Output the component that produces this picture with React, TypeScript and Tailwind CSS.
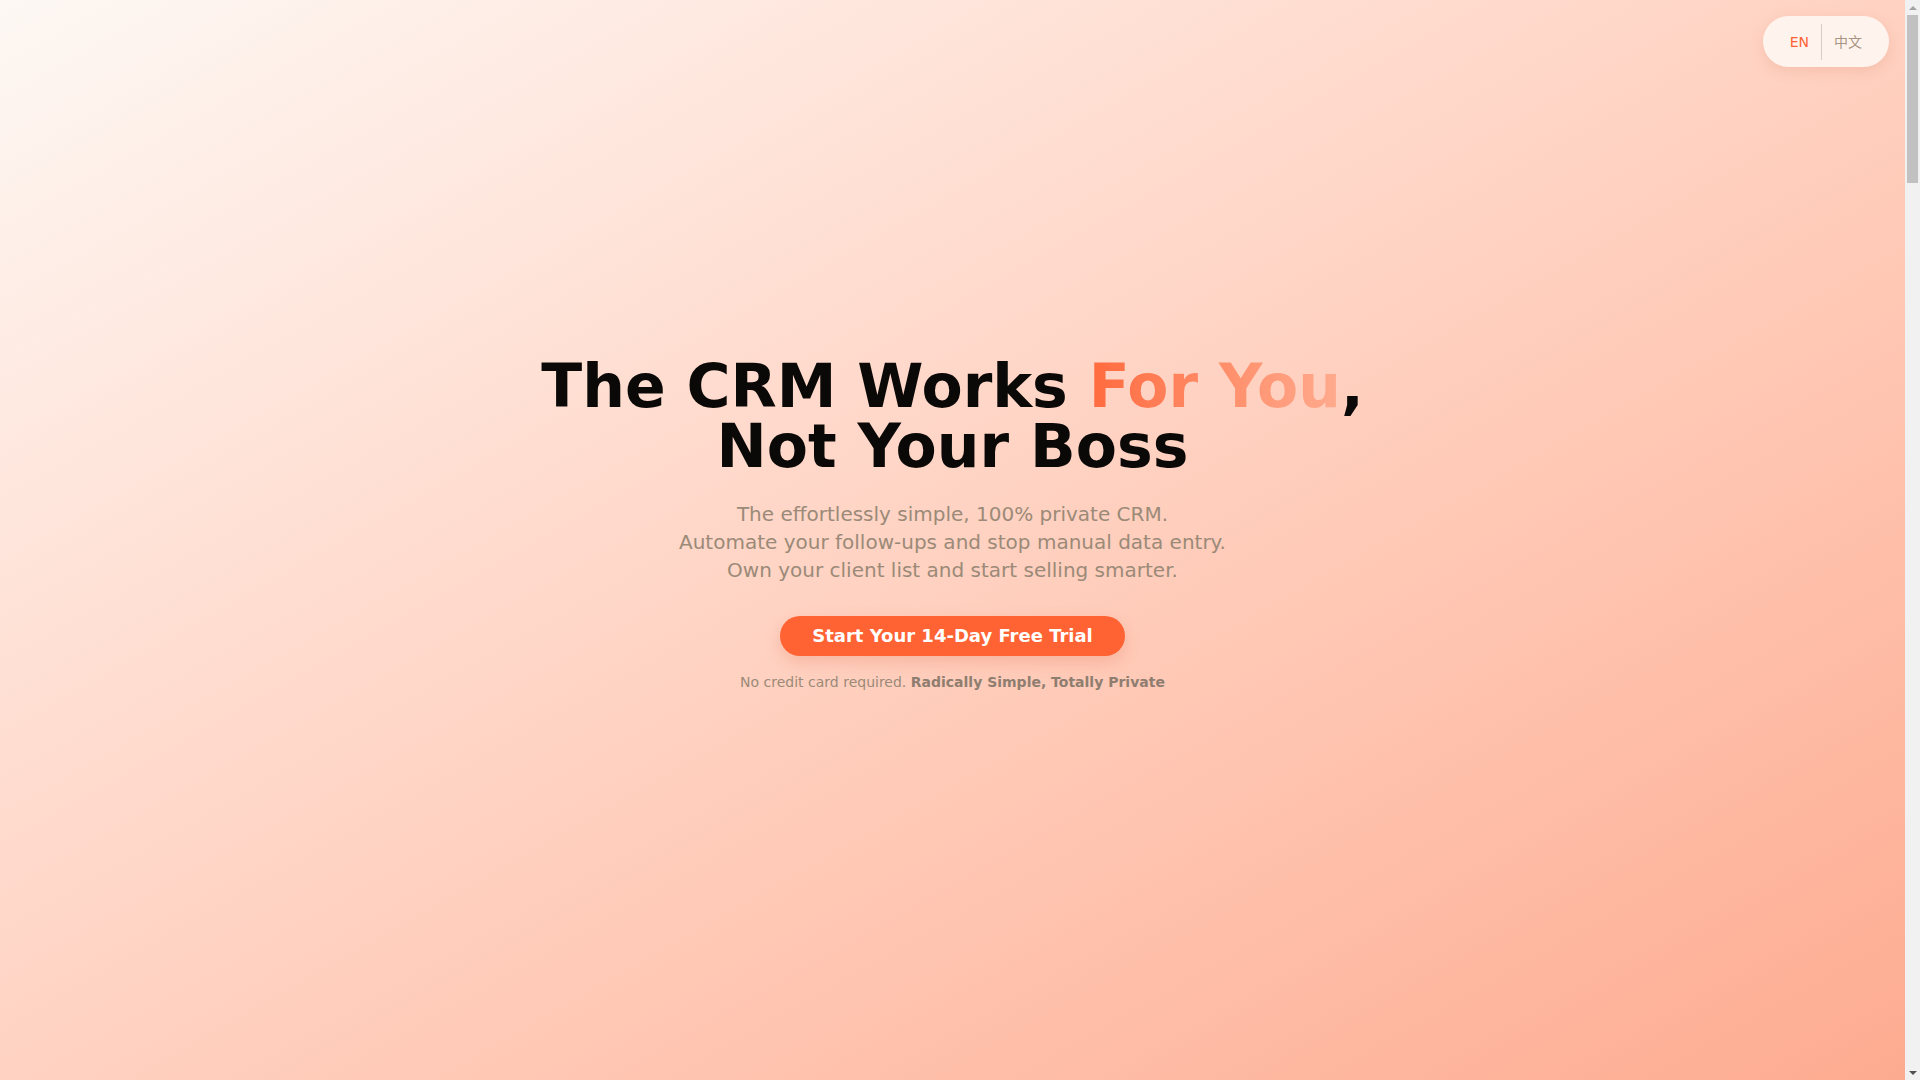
const font = { fontFamily: '"DejaVu Sans", "Noto Sans CJK SC", sans-serif' };

function LangSwitch() {
  return (
    <div className="absolute top-4 right-4 z-10 flex items-center h-[51px] px-[15px] rounded-full bg-[#fff6f2]/90 shadow-[0_4px_14px_rgba(200,110,80,0.18)]">
      <button className="px-3 text-sm text-[#ff6233]">EN</button>
      <span className="h-9 w-px bg-[#d6cdc8]" />
      <button className="px-3 text-sm text-[#a89584]">中文</button>
    </div>
  );
}

function Hero() {
  return (
    <section className="relative min-h-screen flex flex-col items-center justify-center pb-8 text-center bg-linear-to-br from-[#fdf8f4] to-[#fdab90]">
      <LangSwitch />
      <h1 className="text-6xl leading-[60px] font-bold text-[#0b0907]">
        The CRM Works{" "}
        <span className="bg-linear-to-r from-[#ff6a3d] to-[#ffab8e] bg-clip-text text-transparent">For You</span>,
        <br />
        Not Your Boss
      </h1>
      <p className="mt-6 text-xl leading-7 text-[#9b8a78]">
        The effortlessly simple, 100% private CRM.
        <br />
        Automate your follow-ups and stop manual data entry.
        <br />
        Own your client list and start selling smarter.
      </p>
      <button className="mt-8 rounded-full bg-[#ff6233] px-8 py-1.5 text-lg leading-7 font-bold text-white shadow-[0_6px_16px_rgba(220,90,50,0.22)]">
        Start Your 14-Day Free Trial
      </button>
      <p className="mt-4 text-sm text-[#9b8a78]">
        No credit card required. <span className="font-bold text-[#8f7e6f]">Radically Simple, Totally Private</span>
      </p>
    </section>
  );
}

const features = [
  ["Automatic follow-ups", "Never forget to reach out. Reminders arrive right when a client needs you."],
  ["No manual data entry", "Contacts, notes and deals fill themselves in from your daily work."],
  ["100% private", "Your client list stays yours. No tracking, no selling, no sharing."],
  ["Radically simple", "One clean screen for everything. Learn it in five minutes."],
];

function Features() {
  return (
    <section className="min-h-[1200px] bg-white px-8 py-32">
      <div className="mx-auto max-w-6xl">
        <h2 className="text-center text-4xl font-bold text-[#0b0907]">Everything you need, nothing you don't</h2>
        <div className="mt-16 grid grid-cols-2 gap-8">
          {features.map(([t, d]) => (
            <div key={t} className="rounded-2xl bg-[#fff6f2] p-10">
              <h3 className="text-xl font-bold text-[#0b0907]">{t}</h3>
              <p className="mt-3 text-[#9b8a78]">{d}</p>
            </div>
          ))}
        </div>
      </div>
    </section>
  );
}

const steps = ["Sign up in seconds", "Import your contacts", "Let the CRM do the work"];

function Steps() {
  return (
    <section className="min-h-[1100px] bg-[#fff8f4] px-8 py-32">
      <div className="mx-auto max-w-5xl">
        <h2 className="text-center text-4xl font-bold text-[#0b0907]">How it works</h2>
        <div className="mt-16 flex flex-col gap-10">
          {steps.map((s, i) => (
            <div key={s} className="flex items-center gap-6 rounded-2xl bg-white p-10">
              <span className="flex h-12 w-12 items-center justify-center rounded-full bg-[#ff6233] text-lg font-bold text-white">{i + 1}</span>
              <span className="text-xl font-bold text-[#0b0907]">{s}</span>
            </div>
          ))}
        </div>
      </div>
    </section>
  );
}

function Pricing() {
  return (
    <section className="min-h-[1300px] bg-white px-8 py-32">
      <div className="mx-auto max-w-md text-center">
        <h2 className="text-4xl font-bold text-[#0b0907]">Simple pricing</h2>
        <div className="mt-16 rounded-3xl border border-[#ffd8c8] p-12">
          <p className="text-5xl font-bold text-[#0b0907]">$12<span className="text-xl text-[#9b8a78]">/month</span></p>
          <p className="mt-4 text-[#9b8a78]">All features included. Cancel anytime.</p>
          <button className="mt-8 rounded-full bg-[#ff6233] px-8 py-2 text-lg font-bold text-white">Start Your 14-Day Free Trial</button>
        </div>
      </div>
    </section>
  );
}

const faqs = [
  "Is my data really private?",
  "Can I export my client list?",
  "Do I need a credit card for the trial?",
  "Does it work on my phone?",
];

function Faq() {
  return (
    <section className="min-h-[1200px] bg-[#fff8f4] px-8 py-32">
      <div className="mx-auto max-w-3xl">
        <h2 className="text-center text-4xl font-bold text-[#0b0907]">Questions</h2>
        <div className="mt-16 flex flex-col gap-4">
          {faqs.map((q) => (
            <div key={q} className="rounded-xl bg-white px-8 py-6 text-lg font-bold text-[#0b0907]">{q}</div>
          ))}
        </div>
      </div>
    </section>
  );
}

function Footer() {
  return (
    <footer className="min-h-[800px] bg-[#1c1512] px-8 py-24 text-center text-sm text-[#a49282]">
      © 2025 Radically Simple CRM. All rights reserved.
    </footer>
  );
}

// page scrollbar as it appears in the screenshot
function ScrollRail() {
  return (
    <div className="flex h-screen w-[15px] shrink-0 flex-col items-center bg-[#f1f1f1]">
      <div className="flex h-[15px] items-center justify-center">
        <span className="h-0 w-0 border-x-[4px] border-b-[4px] border-x-transparent border-b-[#a3a3a3]" />
      </div>
      <div className="h-[168px] w-[11px] bg-[#c1c1c1]" />
      <div className="flex-1" />
      <div className="flex h-[15px] items-center justify-center">
        <span className="h-0 w-0 border-x-[4px] border-t-[4px] border-x-transparent border-t-[#505050]" />
      </div>
    </div>
  );
}

export default function App() {
  return (
    <div style={font} className="flex h-screen w-full overflow-hidden">
      <main className="h-screen flex-1 overflow-y-auto">
        <Hero />
        <Features />
        <Steps />
        <Pricing />
        <Faq />
        <Footer />
      </main>
      <ScrollRail />
    </div>
  );
}
